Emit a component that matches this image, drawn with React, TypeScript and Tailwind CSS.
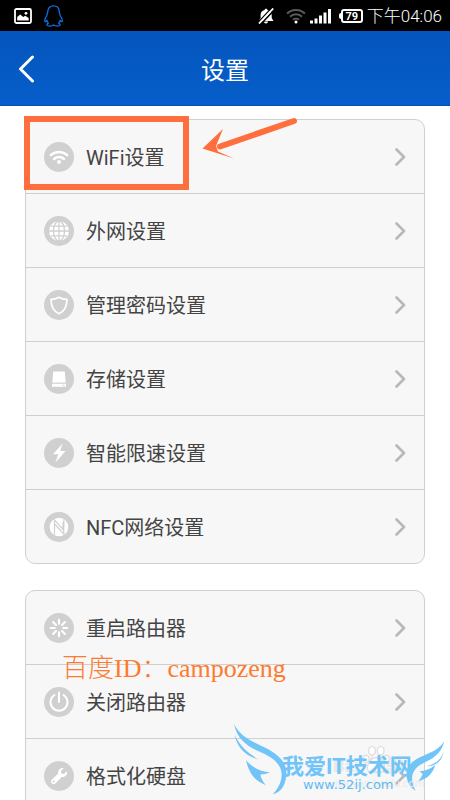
import type { ReactNode } from 'react'

interface Item {
  label: string
  icon: ReactNode
}

const NETWORK_ITEMS: Item[] = [
  { label: 'WiFi设置', icon: <WifiGlyph /> },
  { label: '外网设置', icon: <GlobeGlyph /> },
  { label: '管理密码设置', icon: <ShieldGlyph /> },
  { label: '存储设置', icon: <DiskGlyph /> },
  { label: '智能限速设置', icon: <BoltGlyph /> },
  { label: 'NFC网络设置', icon: <NfcGlyph /> },
]

const DEVICE_ITEMS: Item[] = [
  { label: '重启路由器', icon: <RestartGlyph /> },
  { label: '关闭路由器', icon: <PowerGlyph /> },
  { label: '格式化硬盘', icon: <WrenchGlyph /> },
]

export default function App() {
  return (
    <div className="relative flex flex-col h-screen overflow-hidden bg-white font-['Roboto','Noto_Sans_CJK_SC',sans-serif]">
      <StatusBar />

      <header className="grid grid-cols-[1fr_auto_1fr] items-center h-[75px] shrink-0 px-4 pt-px bg-linear-to-b from-[#0554bc] to-[#065fcb] border-b border-[#0450b8] text-white">
        <button type="button" aria-label="返回" className="w-5">
          <svg className="w-5 h-7" viewBox="0 0 20 28" fill="none" stroke="currentColor" strokeWidth="3" strokeLinecap="round" strokeLinejoin="round">
            <path d="M16.500 2 4.500 14l12 12" />
          </svg>
        </button>
        <h1 className="pt-1 text-2xl">设置</h1>
      </header>

      <main className="flex-1 min-h-0 overflow-hidden px-[25px] pt-[13px] space-y-[26px]">
        <SettingsCard items={NETWORK_ITEMS} />
        <SettingsCard items={DEVICE_ITEMS} />
      </main>

      <Annotations />
      <Watermark />
    </div>
  )
}

function StatusBar() {
  return (
    <div className="flex items-center justify-between h-[31px] shrink-0 pl-[14px] pr-2 bg-black text-white">
      <div className="flex items-center gap-3">
        <svg className="w-[18px] h-4" viewBox="0 0 18 16" fill="none">
          <rect x="1" y="1" width="16" height="14" rx="1.500" stroke="#fff" strokeWidth="1.800" />
          <path d="M3.200 12.500V9l3-2.600 3 2.600 2-1.300 3.500 2.300v2.500z" fill="#fff" />
          <circle cx="12" cy="5.300" r="1.400" fill="#fff" />
        </svg>
        <svg className="w-[19px] h-[22px]" viewBox="0 0 19 22" fill="none" stroke="#0a6fe0" strokeWidth="1.300" strokeLinejoin="round">
          <path d="M9.500.8C6 .8 3.800 3.200 3.800 6.600c0 1-.5 1.600-.7 2.500-.1.500 0 .9-.3 1.500C1.500 12.300.7 14 .7 15.500c0 .8.200 1.300.6 1.300.500 0 1-.7 1.500-1.500.3 1 .8 2 1.600 2.800-1 .4-1.500.9-1.500 1.500 0 1 1.300 1.500 3 1.500 1.600 0 2.900-.5 3.600-1.200.7.700 2 1.200 3.600 1.200 1.700 0 3-.5 3-1.500 0-.6-.5-1.100-1.500-1.500.8-.8 1.300-1.800 1.600-2.800.5.800 1 1.500 1.500 1.500.4 0 .6-.5.6-1.300 0-1.500-.8-3.200-2.100-4.900-.3-.6-.2-1-.3-1.500-.2-.9-.7-1.500-.7-2.500C15.200 3.200 13 .8 9.500.8z" />
        </svg>
      </div>

      <div className="flex items-center">
        <svg className="w-4 h-4 mr-3" viewBox="0 0 16 16">
          <path d="M8 .8c.8 0 1.300.5 1.400 1.100 2.800.6 4.300 2.500 4.300 5V10l1.800 3H.8l1.800-3V6.900c0-2.500 1.300-4.400 4-5C6.700 1.300 7.200.8 8 .8zM6 13.500h4c0 1-.8 2-2 2s-2-1-2-2z" fill="#fff" />
          <path d="M16.500 1.500 2.500 16.500" stroke="#000" strokeWidth="1.600" />
          <path d="M13.500 0 0 14.500" stroke="#000" strokeWidth="1.200" />
          <path d="M15.200.5 1 15.500" stroke="#fff" strokeWidth="1.800" />
        </svg>
        <svg className="w-5 h-4 mr-1" viewBox="0 0 20 16" fill="none" stroke="#5a5a5a" strokeWidth="2">
          <path d="M1 5.500a13 13 0 0 1 18 0M4 8.700a8.700 8.700 0 0 1 12 0M7 11.800a4.500 4.500 0 0 1 6 0" />
          <circle cx="10" cy="14" r="1.500" fill="#fff" stroke="none" />
        </svg>
        <svg className="w-[21px] h-4 mr-2" viewBox="0 0 21 16" fill="#fff">
          <path d="M0 12.500h3V15.500H0zM4.500 10.500h3v5h-3zM9 7.500h3v8H9zM13.500 4.500h3v11h-3zM18 1h3v14.500h-3z" />
        </svg>
        <div className="flex items-center mr-1 pt-px">
          <span className="w-[2px] h-[6px] rounded-l bg-white" />
          <span className="flex items-center justify-center w-[22px] h-[14px] rounded-[3px] border-2 border-white text-[11px] leading-none font-bold">
            79
          </span>
        </div>
        <span className="pt-px text-[17px] leading-none font-light">下午04:06</span>
      </div>
    </div>
  )
}

function SettingsCard({ items }: { items: Item[] }) {
  return (
    <ul className="rounded-[10px] border border-[#cfcfcf] bg-[#f7f7f7] divide-y divide-[#cfcfcf] overflow-hidden">
      {items.map((item) => (
        <li key={item.label}>
          <button type="button" className="flex items-center gap-3 w-full h-[73px] px-[18px] text-left text-[#444]">
            <svg className="w-[30px] h-[30px] shrink-0" viewBox="0 0 30 30" fill="none">
              <circle cx="15" cy="15" r="15" fill="#d0d0d0" />
              {item.icon}
            </svg>
            <span className="flex-1 pt-[2px] text-xl">{item.label}</span>
            <svg className="w-3 h-[18px]" viewBox="0 0 12 18" fill="none" stroke="#b8b8b8" strokeWidth="2.600" strokeLinecap="round" strokeLinejoin="round">
              <path d="M2.500 1.500 10 9l-7.500 7.500" />
            </svg>
          </button>
        </li>
      ))}
    </ul>
  )
}

// Marcações por cima da lista
function Annotations() {
  return (
    <>
      <div className="absolute left-6 top-[116px] w-[165px] h-[74px] border-[6px] border-[#ff6f3d] pointer-events-none" />
      <svg className="absolute left-[200px] top-[115px] w-[100px] h-[46px] pointer-events-none" viewBox="0 0 100 46">
        <path d="M94 6 20 31.500" stroke="#ff6f3d" strokeWidth="6" strokeLinecap="round" />
        <path d="M2.500 33.500 23 14l-7 17 2 5.500 16 7z" fill="#ff6f3d" />
      </svg>
      <p className="absolute left-[62px] top-[651px] text-[26px] leading-9 font-light whitespace-nowrap text-[#ff7a2e] font-['Liberation_Serif','Noto_Sans_CJK_SC',serif] pointer-events-none">
        百度ID：campozeng
      </p>
    </>
  )
}

function Watermark() {
  return (
    <div className="absolute right-0 bottom-0 w-[230px] h-[90px] pointer-events-none">
      <div className="absolute left-[113px] top-[46px] text-lg leading-5 font-bold whitespace-nowrap text-[#e9e9e9]">Bai&nbsp;&nbsp;经验</div>
      <svg className="absolute inset-0 w-full h-full" viewBox="0 0 690 270">
        <g fill="#fff" stroke="#dedede" strokeWidth="4">
          <ellipse cx="456" cy="122" rx="10" ry="13" />
          <ellipse cx="482" cy="122" rx="10" ry="13" />
          <ellipse cx="438" cy="147" rx="9" ry="11" />
          <ellipse cx="499" cy="147" rx="9" ry="11" />
          <path d="M468 143c-14 0-26 18-26 30 0 16 18 14 26 12 8 2 26 4 26-12 0-12-12-30-26-30z" />
        </g>
        <g fill="#70c4f8">
          <path d="M42 42C62 82 98 94 136 113c42 21 63 45 63 76 0 34-15 58-41 64 18-20 27-40 27-59 0-35-34-55-69-70C79 107 52 87 42 42z" />
          <path d="M44 76c8 36 32 64 74 73-23-11-54-34-74-73z" />
          <path d="M78 151c10 41 27 62 60 75-9-12-17-23-16-33 9 0 18-1 28-6-30-3-52-14-72-36z" />
          <path d="M673 93c-16 28-45 35-73 49-31 15-44 34-40 59 3 20 12 33 27 41-12-22-14-41-6-57 9-17 26-24 47-35 22-12 38-27 45-57z" />
          <path d="M671 125c-9 26-26 37-52 44 21 1 46-10 52-44z" />
          <path d="M646 164c-14 12-28 18-48 20 5 3 8 6 10 9-3 7-7 14-13 20 26-5 44-23 51-49z" />
        </g>
      </svg>
      <div className="absolute left-[62px] top-[43px] text-[22px] leading-7 font-bold whitespace-nowrap text-[#70c4f8]">
        我爱IT技术网
      </div>
      <div className="absolute left-[115px] top-[66px] text-[11px] leading-4 whitespace-nowrap text-[#e9e9e9]">
        jingyan.baidu.com
      </div>
      <a href="#" className="absolute left-[83px] top-[67px] text-[13px] leading-4 whitespace-nowrap text-[#62baf3] font-['DejaVu_Sans',sans-serif]">
        www.52ij.com
      </a>
    </div>
  )
}

function WifiGlyph() {
  return (
    <>
      <path d="M6.800 13.200a12 12 0 0 1 16.400 0M10 17a7.300 7.300 0 0 1 10 0" stroke="#fff" strokeWidth="2.500" strokeLinecap="round" />
      <circle cx="15" cy="20" r="2" fill="#fff" />
    </>
  )
}

function GlobeGlyph() {
  return (
    <>
      <circle cx="15" cy="15" r="10" fill="#fff" />
      <g stroke="#d0d0d0" strokeWidth="1.300">
        <path d="M15 5v20M5 15h20M7 10.200h16M7 19.800h16" />
        <ellipse cx="15" cy="15" rx="5.500" ry="10" />
      </g>
    </>
  )
}

function ShieldGlyph() {
  return <path d="M15 7.200c2.600 1.600 5.200 2.200 8 2.200-.1 6.800-2 11.600-8 14.300-6-2.700-7.900-7.500-8-14.300 2.800 0 5.400-.6 8-2.200z" stroke="#fff" strokeWidth="1.700" strokeLinejoin="round" />
}

function DiskGlyph() {
  return (
    <>
      <path d="M9.200 7.500h11.600l.9 11H8.300zM8 19.700h14v3H8z" fill="#fff" />
      <path d="M18.500 21.200h2" stroke="#d0d0d0" />
    </>
  )
}

function BoltGlyph() {
  return <path d="M18.500 5.500 9 16.300h5.300l-2.800 8.200L21.500 13h-5.300z" fill="#fff" />
}

function NfcGlyph() {
  return (
    <>
      <circle cx="15" cy="15" r="9.300" fill="#fff" />
      <path d="M10.500 22.500V8l8.500 9.500V10M19.800 7.500V22l-8.800-9.500" stroke="#d0d0d0" strokeWidth="1.200" />
    </>
  )
}

function RestartGlyph() {
  return (
    <path
      d="M15 6.700v4M15 19.300v4M6.700 15h4M19.300 15h4M9.100 9.100l2.900 2.900M18 18l2.900 2.900M9.100 20.900 12 18M18 12l2.900-2.900"
      stroke="#fff"
      strokeWidth="2.100"
      strokeLinecap="round"
    />
  )
}

function PowerGlyph() {
  return <path d="M15 5.500V15M10.500 8a8.500 8.500 0 1 0 9 0" stroke="#fff" strokeWidth="2" strokeLinecap="round" />
}

function WrenchGlyph() {
  return (
    <path
      fillRule="evenodd"
      d="M19.800 7.200 16.900 10l.5 2.600 2.700.5 2.700-2.900c.9 3.200-1.600 6.300-4.900 5.800l-6.300 6.200c-1.200 1.200-2.800 1.100-3.800.2-1-1-1-2.700.1-3.800l6.300-6.100c-.6-3.500 2.300-6.300 5.600-5.300zM9.700 19.400a1.100 1.100 0 1 0 0 2.200 1.100 1.100 0 0 0 0-2.200z"
      fill="#fff"
    />
  )
}
